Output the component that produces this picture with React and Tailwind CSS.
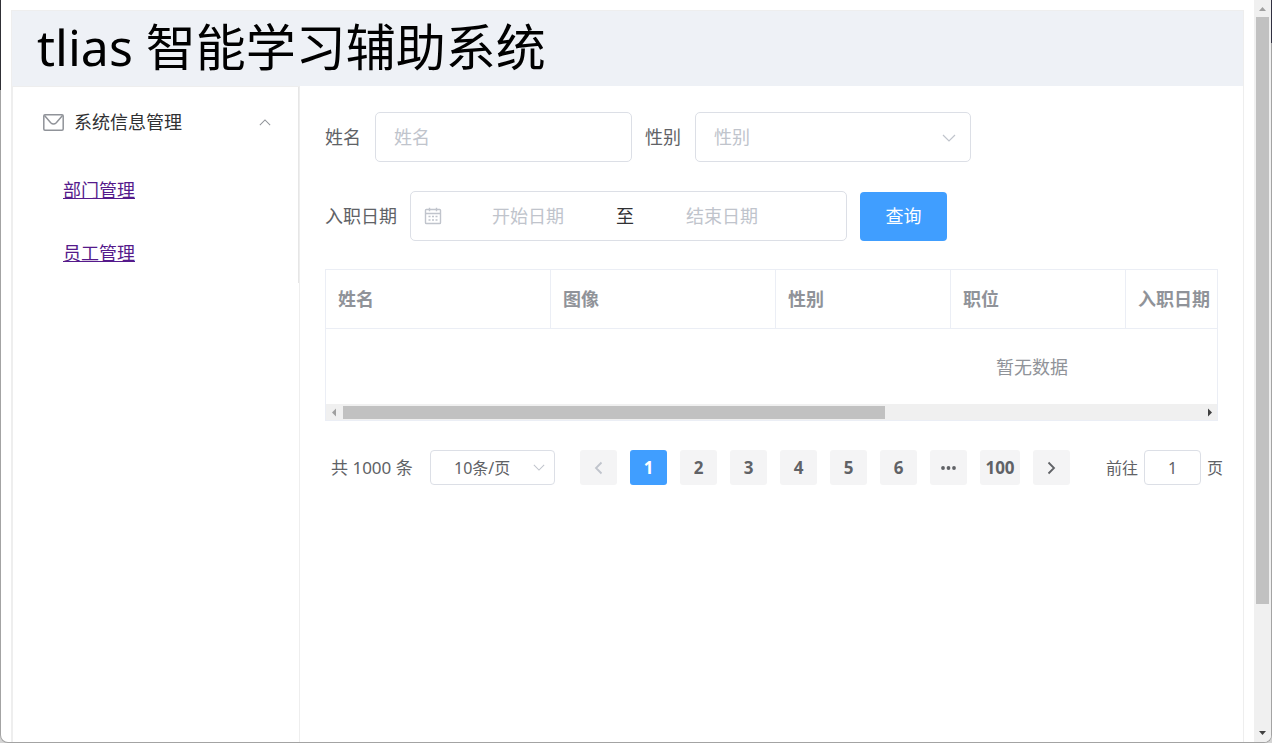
import React, { useState } from "react";

const columns = [
  { title: "姓名", width: "w-[225px]" },
  { title: "图像", width: "w-[225px]" },
  { title: "性别", width: "w-[175px]" },
  { title: "职位", width: "w-[175px]" },
  { title: "入职日期", width: "" },
];

function Chevron({ className }) {
  return (
    <svg viewBox="0 0 14 8" className={className} fill="none" stroke="currentColor" strokeWidth="1.2" aria-hidden="true">
      <path d="M1 1l6 6 6-6" />
    </svg>
  );
}

function MailIcon() {
  return (
    <svg viewBox="0 0 21 17" className="h-[17px] w-[21px] text-[#909399]" fill="none" stroke="currentColor" strokeWidth="1.5" aria-hidden="true">
      <rect x="0.8" y="0.8" width="19.4" height="15.4" rx="1.2" />
      <path d="M1.5 1.5l6.2 7.2q2.8 2.6 5.6 0l6.2-7.2" />
    </svg>
  );
}

function CalendarIcon() {
  return (
    <svg viewBox="0 0 18 18" className="h-[18px] w-[18px] shrink-0 text-[#c0c4cc]" fill="none" stroke="currentColor" strokeWidth="1.4" aria-hidden="true">
      <rect x="1.5" y="2.5" width="15" height="14" rx="0.8" />
      <path d="M1.5 6.5h15M5.5 0.8v3.4M12.5 0.8v3.4" />
      <path d="M4.5 9.5h2M8 9.5h2M11.5 9.5h2M4.5 13h2M8 13h2M11.5 13h2" strokeWidth="1.6" />
    </svg>
  );
}

function Sidebar() {
  const [open, setOpen] = useState(true);
  return (
    <aside className="w-72 shrink-0 border border-b-0 border-[#eee]">
      <nav className="border-r border-[#e6e6e6]">
        <button
          type="button"
          aria-expanded={open}
          onClick={() => setOpen(!open)}
          className="flex h-[70px] w-full items-center pr-[27px] pl-[30px] text-[#303133]"
        >
          <MailIcon />
          <span className="ml-2.5 flex-1 text-left">系统信息管理</span>
          <Chevron className="h-[7px] w-3 rotate-180 text-[#909399]" />
        </button>
        {open && (
          <ul className="text-[#551a8b]">
            <li className="flex h-[63px] items-center pt-0.5 pl-[50px]">
              <a href="#dept" className="underline">部门管理</a>
            </li>
            <li className="flex h-[63px] items-center pt-0.5 pl-[50px]">
              <a href="#emp" className="underline">员工管理</a>
            </li>
          </ul>
        )}
      </nav>
    </aside>
  );
}

function SearchForm() {
  return (
    <form className="flex flex-col gap-[29px] text-[#606266]" onSubmit={(e) => e.preventDefault()}>
      <div className="flex items-center gap-[13px]">
        <div className="flex items-center">
          <label htmlFor="name" className="w-[50px]">姓名</label>
          <input
            id="name"
            placeholder="姓名"
            className="h-[50px] w-[257px] rounded-[5px] border border-[#dcdfe6] px-[18px] placeholder:text-[#c0c4cc]"
          />
        </div>
        <div className="flex items-center">
          <label htmlFor="gender" className="w-[50px]">性别</label>
          <div className="relative">
            <select
              id="gender"
              defaultValue=""
              className="h-[50px] w-[276px] appearance-none rounded-[5px] border border-[#dcdfe6] bg-white px-[18px] text-[#c0c4cc]"
            >
              <option value="">性别</option>
            </select>
            <Chevron className="pointer-events-none absolute top-[22px] right-[15px] h-2 w-3.5 text-[#c0c4cc]" />
          </div>
        </div>
      </div>
      <div className="flex items-center gap-[13px]">
        <div className="flex items-center">
          <label htmlFor="start" className="w-[85px]">入职日期</label>
          <div className="flex h-[50px] w-[437px] items-center rounded-[5px] border border-[#dcdfe6] pr-[38px] pl-[13px]">
            <CalendarIcon />
            <input id="start" placeholder="开始日期" className="w-0 flex-1 text-center placeholder:text-[#c0c4cc]" />
            <span className="w-[22px] text-center text-[#303133]">至</span>
            <input
              aria-label="结束日期"
              placeholder="结束日期"
              className="w-0 flex-1 text-center placeholder:text-[#c0c4cc]"
            />
          </div>
        </div>
        <button type="submit" className="h-[49px] w-[87px] rounded-[4px] bg-[#409eff] text-white">查询</button>
      </div>
    </form>
  );
}

function EmployeeTable() {
  return (
    <div className="mt-7 border border-[#ebeef5] text-[#909399]">
      <div className="overflow-hidden">
        <table className="w-[1412px] table-fixed border-separate border-spacing-0">
          <thead>
            <tr className="h-[59px]">
              {columns.map((c) => (
                <th
                  key={c.title}
                  className={`${c.width} border-r border-b border-[#ebeef5] px-3 text-left font-bold`}
                >
                  {c.title}
                </th>
              ))}
            </tr>
          </thead>
          <tbody>
            <tr className="h-[75px]">
              <td colSpan={5} className="text-center">暂无数据</td>
            </tr>
          </tbody>
        </table>
      </div>
      <div className="flex h-4 items-center bg-[#f0f0f0]">
        <svg viewBox="0 0 17 16" className="h-4 w-[17px]" aria-hidden="true">
          <path d="M6 8.5l4-4v8z" fill="#a0a0a0" />
        </svg>
        <div className="h-[13px] flex-[542] bg-[#c1c1c1]" />
        <div className="flex-[315]" />
        <svg viewBox="0 0 17 16" className="h-4 w-[17px]" aria-hidden="true">
          <path d="M12 8.5l-4-4v8z" fill="#404040" />
        </svg>
      </div>
    </div>
  );
}

function Pager() {
  const [page, setPage] = useState(1);
  const item = "flex h-[35px] items-center justify-center rounded-[3px] text-[17px] font-bold";
  return (
    <div className="mt-[29px] flex items-center pl-1.5 text-base whitespace-nowrap text-[#606266]">
      <span className="w-[99px] shrink-0 text-[17px]">共 1000 条</span>
      <div className="relative shrink-0">
        <select
          aria-label="每页条数"
          className="block h-[35px] w-[125px] appearance-none rounded-[4px] border border-[#dcdfe6] bg-white pl-[23px]"
        >
          <option>10条/页</option>
        </select>
        <Chevron className="pointer-events-none absolute top-3.5 right-2.5 h-[7px] w-3 text-[#c0c4cc]" />
      </div>
      <div className="ml-[25px] flex gap-[13px]">
        <button type="button" aria-label="上一页" disabled className={`${item} w-[37px] bg-[#f4f4f5] text-[#c0c4cc]`}>
          <svg viewBox="0 0 9 14" className="h-3.5 w-[9px]" fill="none" stroke="currentColor" strokeWidth="1.8" aria-hidden="true">
            <path d="M7.5 1.5L2 7l5.5 5.5" />
          </svg>
        </button>
        {[1, 2, 3, 4, 5, 6].map((n) => (
          <button
            key={n}
            type="button"
            onClick={() => setPage(n)}
            className={`${item} w-[37px] ${n === page ? "bg-[#409eff] text-white" : "bg-[#f4f4f5]"}`}
          >
            {n}
          </button>
        ))}
        <button type="button" aria-label="更多" className={`${item} w-[37px] bg-[#f4f4f5]`}>
          <svg viewBox="0 0 15 4" className="h-1 w-[15px]" fill="currentColor" aria-hidden="true">
            <circle cx="2" cy="2" r="1.9" />
            <circle cx="7.5" cy="2" r="1.9" />
            <circle cx="13" cy="2" r="1.9" />
          </svg>
        </button>
        <button type="button" className={`${item} w-10 bg-[#f4f4f5]`}>100</button>
        <button type="button" aria-label="下一页" className={`${item} w-[37px] bg-[#f4f4f5]`}>
          <svg viewBox="0 0 9 14" className="h-3.5 w-[9px]" fill="none" stroke="currentColor" strokeWidth="1.8" aria-hidden="true">
            <path d="M1.5 1.5L7 7l-5.5 5.5" />
          </svg>
        </button>
      </div>
      <label htmlFor="goto" className="ml-9">前往</label>
      <input
        id="goto"
        defaultValue="1"
        className="mx-1.5 h-[35px] w-[57px] shrink-0 rounded-[4px] border border-[#dcdfe6] text-center"
      />
      <span>页</span>
    </div>
  );
}

export default function App() {
  return (
    <div className="h-screen bg-[#d4d4d4] font-['Noto_Sans','Noto_Sans_CJK_SC',sans-serif] text-lg leading-6">
      <div className="relative flex h-full overflow-hidden rounded-b-lg border-x border-b border-[#a3a3a3] bg-white">
        <div className="flex min-w-0 flex-1 flex-col px-2.5 pt-2.5">
          <div className="flex flex-1 flex-col border-x border-[#eee]">
            <header className="h-[76px] border-t border-[#eee] bg-[#eef1f6] pl-[25px]">
              <h1 className="text-[50px] leading-[72px] font-normal text-black">tlias 智能学习辅助系统</h1>
            </header>
            <div className="flex flex-1">
              <Sidebar />
              <main className="min-w-0 flex-1 px-[25px] pt-[26px]">
                <SearchForm />
                <EmployeeTable />
                <Pager />
              </main>
            </div>
          </div>
        </div>
        <div className="flex w-[17px] flex-col items-center bg-[#f0f0f0]">
          <svg viewBox="0 0 17 17" className="h-[17px] w-[17px] shrink-0" aria-hidden="true">
            <path d="M5 11l3.5-4 3.5 4z" fill="#a0a0a0" />
          </svg>
          <div className="w-[13px] flex-[587] bg-[#c1c1c1]" />
          <div className="flex-[121]" />
          <svg viewBox="0 0 17 17" className="h-[17px] w-[17px] shrink-0" aria-hidden="true">
            <path d="M5 6l3.5 4L12 6z" fill="#404040" />
          </svg>
        </div>
      </div>
      <div className="absolute top-0 left-0 h-[90px] w-px bg-[#303036]" />
      <div className="absolute top-0 right-0 h-[43px] w-px bg-[#303040]" />
    </div>
  );
}
